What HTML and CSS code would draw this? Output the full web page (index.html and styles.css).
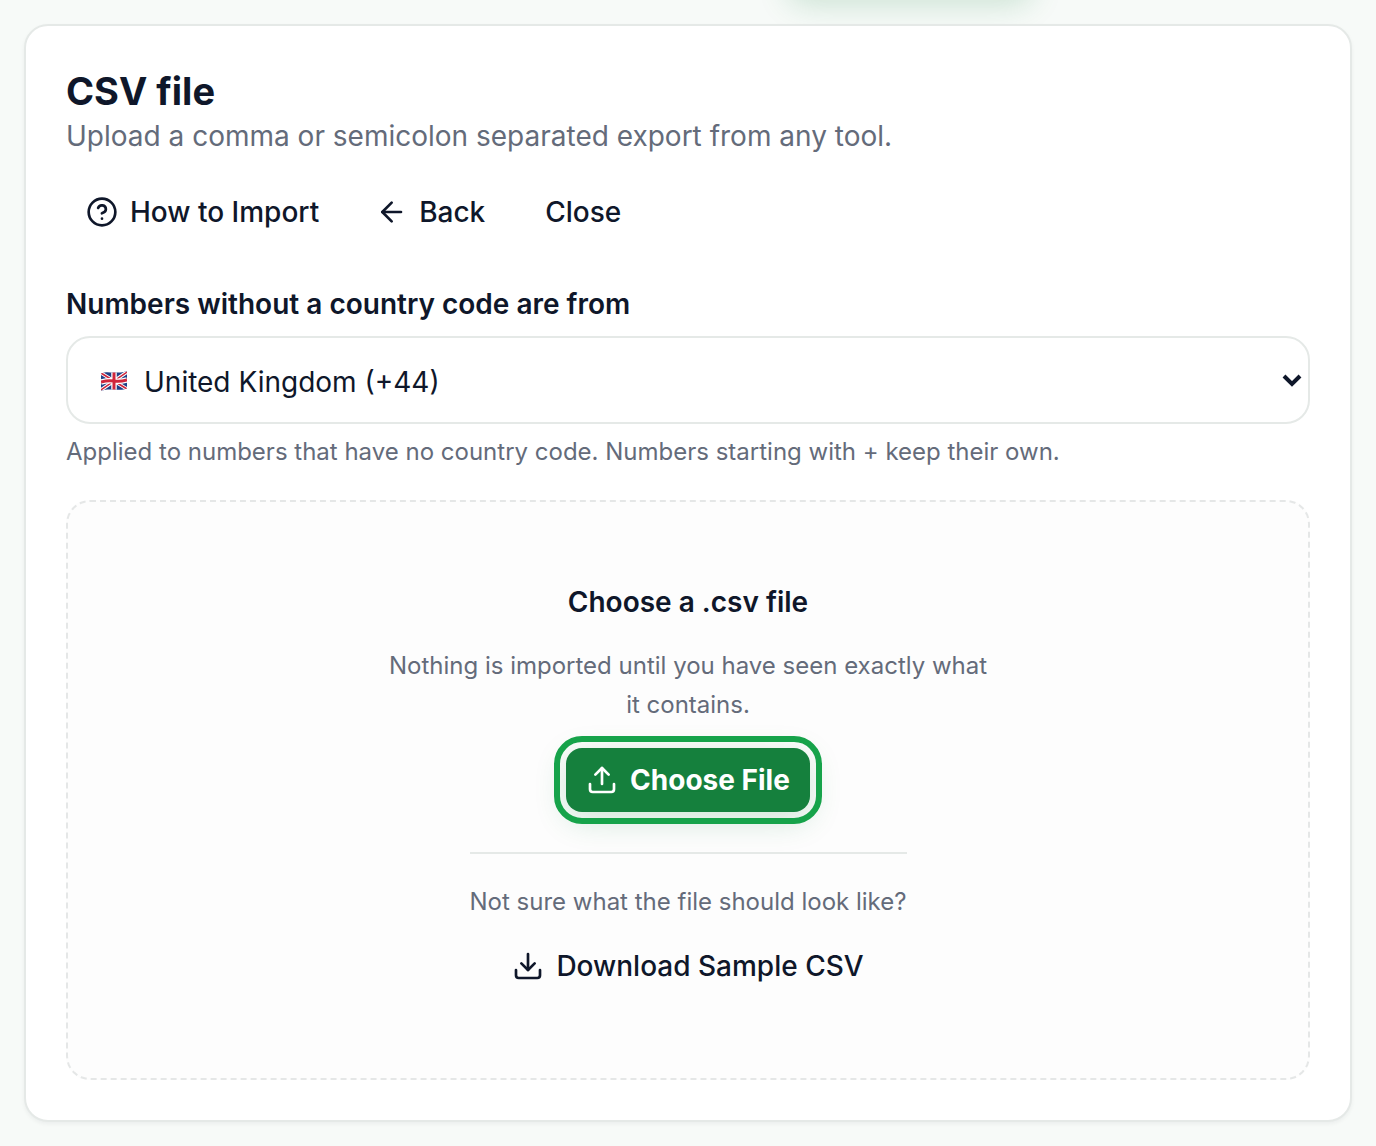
FILE: index.html
```html
<!DOCTYPE html>
<html lang="en">
<head>
  <meta charset="UTF-8">
  <meta name="viewport" content="width=device-width, initial-scale=1.0">
  <title>Import CSV</title>
  <link rel="stylesheet" href="styles.css">
</head>
<body>
  <div class="top-glow"></div>

  <main class="card">
    <header class="card-header">
      <h1 class="card-title">CSV file</h1>
      <p class="card-subtitle">Upload a comma or semicolon separated export from any tool.</p>
    </header>

    <div class="actions">
      <button type="button" class="btn">
        <svg class="icon" viewBox="0 0 24 24" aria-hidden="true">
          <circle cx="12" cy="12" r="10"/>
          <path d="M9.09 9a3 3 0 0 1 5.83 1c0 2-3 3-3 3"/>
          <path d="M12 17h.01"/>
        </svg>
        How to Import
      </button>
      <button type="button" class="btn">
        <svg class="icon" viewBox="0 0 24 24" aria-hidden="true">
          <path d="m12.500 19-7-7 7-7"/>
          <path d="M19.500 12h-14"/>
        </svg>
        Back
      </button>
      <button type="button" class="btn btn-plain">Close</button>
    </div>

    <div class="form-group">
      <label for="country">Numbers without a country code are from</label>
      <div class="select-wrap">
        <select id="country" name="country">
          <option value="GB" selected>United Kingdom (+44)</option>
        </select>
        <svg class="flag" viewBox="0 0 26 20" aria-hidden="true">
          <clipPath id="flag-shape">
            <path d="M0 2.500C5 .5 8 1.500 13 1.500S21 2 26 0V17.500C21 19.500 18 18.500 13 18.500S5 18 0 20Z"/>
          </clipPath>
          <g clip-path="url(#flag-shape)">
            <rect width="26" height="20" fill="#1f3f86"/>
            <path d="M0 2 26 18M26 1 0 19" stroke="#fff" stroke-width="3.500"/>
            <path d="M0 2 26 18M26 1 0 19" stroke="#d0263c" stroke-width="1.500"/>
            <path d="M13 0V20M0 11Q7 9 13 10T26 9" fill="none" stroke="#fff" stroke-width="5.500"/>
            <path d="M13 0V20M0 11Q7 9 13 10T26 9" fill="none" stroke="#d0263c" stroke-width="3"/>
          </g>
        </svg>
        <svg class="chevron" viewBox="0 0 20 14" aria-hidden="true">
          <path d="m2 3 8 8 8-8"/>
        </svg>
      </div>
      <p class="help">Applied to numbers that have no country code. Numbers starting with + keep their own.</p>
    </div>

    <section class="dropzone">
      <h2 class="dropzone-title">Choose a .csv file</h2>
      <p class="dropzone-text">Nothing is imported until you have seen exactly what it contains.</p>
      <button type="button" class="btn btn-primary">
        <svg class="icon" viewBox="0 0 24 24" aria-hidden="true">
          <path d="M21 15v4a2 2 0 0 1-2 2H5a2 2 0 0 1-2-2v-4"/>
          <path d="m17 8-5-5-5 5"/>
          <path d="M12 3v12"/>
        </svg>
        Choose File
      </button>
      <div class="sample">
        <p class="sample-text">Not sure what the file should look like?</p>
        <button type="button" class="btn">
          <svg class="icon" viewBox="0 0 24 24" aria-hidden="true">
            <path d="M21 15v4a2 2 0 0 1-2 2H5a2 2 0 0 1-2-2v-4"/>
            <path d="m7 10 5 5 5-5"/>
            <path d="M12 15V3"/>
          </svg>
          Download Sample CSV
        </button>
      </div>
    </section>
  </main>
</body>
</html>
```
FILE: styles.css
```css
* {
  box-sizing: border-box;
}

body {
  margin: 0;
  padding: 24px;
  background-color: #f7faf8;
  color: #0f172a;
  font-family: Inter, "Liberation Sans", sans-serif;
  font-size: 28px;
  line-height: 40px;
}

h1, h2, p {
  margin: 0;
}

/* shadow of the button that sits just above the viewport */
.top-glow {
  position: absolute;
  top: -64px;
  left: 788px;
  width: 244px;
  height: 60px;
  border-radius: 16px;
  box-shadow: 0 8px 32px rgba(21, 128, 61, 0.2);
}

.card {
  position: relative;
  padding: 40px;
  background-color: #fff;
  border: 2px solid #e5e9e7;
  border-radius: 24px;
  box-shadow: 0 2px 4px rgba(15, 23, 42, 0.05);
}

.card-title {
  font-size: 38px;
  font-weight: 700;
  line-height: 50px;
}

.card-subtitle {
  color: #646b7a;
}

.actions {
  display: flex;
  flex-wrap: wrap;
  gap: 16px;
  margin-top: 24px;
}

.btn {
  display: inline-flex;
  align-items: center;
  justify-content: center;
  gap: 12px;
  height: 64px;
  padding: 0 20px;
  border: 0;
  border-radius: 16px;
  background: none;
  color: inherit;
  font: inherit;
  font-weight: 500;
  cursor: pointer;
}

.btn-plain {
  padding: 0 24px;
}

.btn-primary {
  background-color: #15803d;
  color: #fff;
  font-weight: 700;
  outline: 6px solid #16a34a;
  outline-offset: 6px;
  box-shadow: 0 8px 32px rgba(21, 128, 61, 0.2);
}

.icon {
  width: 32px;
  height: 32px;
  fill: none;
  stroke: currentColor;
  stroke-width: 2;
  stroke-linecap: round;
  stroke-linejoin: round;
}

.form-group {
  display: flex;
  flex-direction: column;
  gap: 12px;
  margin-top: 40px;
}

.form-group label {
  font-weight: 600;
}

.select-wrap {
  position: relative;
}

.select-wrap select {
  display: block;
  width: 100%;
  height: 88px;
  padding: 4px 48px 0 76px;
  border: 2px solid #e5e9e7;
  border-radius: 24px;
  background-color: #fff;
  color: inherit;
  font: inherit;
  appearance: none;
}

.flag {
  position: absolute;
  top: 35px;
  left: 35px;
  width: 26px;
  height: 20px;
  pointer-events: none;
}

.chevron {
  position: absolute;
  top: 37px;
  right: 8px;
  width: 20px;
  height: 14px;
  fill: none;
  stroke: #0f172a;
  stroke-width: 4;
  pointer-events: none;
}

.help {
  color: #646b7a;
  font-size: 24px;
  line-height: 32px;
}

.dropzone {
  display: flex;
  flex-direction: column;
  align-items: center;
  margin-top: 32px;
  padding: 80px;
  border: 2px dashed #e5e7e7;
  border-radius: 24px;
  background-color: #fdfdfd;
  text-align: center;
}

.dropzone-title {
  font-size: 28px;
  font-weight: 600;
}

.dropzone-text {
  max-width: 608px;
  margin: 24px 0;
  color: #646b7a;
  font-size: 24px;
  line-height: 39px;
}

.sample {
  display: flex;
  flex-direction: column;
  align-items: center;
  gap: 16px;
  margin-top: 40px;
  padding-top: 32px;
  border-top: 2px solid #e5e9e7;
}

.sample-text {
  color: #646b7a;
  font-size: 24px;
  line-height: 32px;
}
```
